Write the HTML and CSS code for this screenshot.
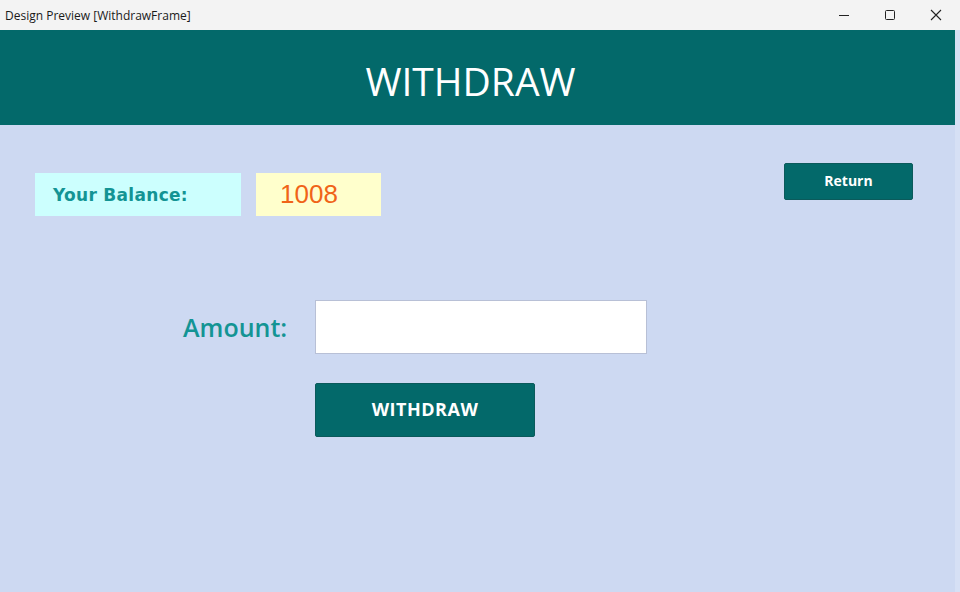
FILE: index.html
```html
<!DOCTYPE html>
<html>
<head>
<meta charset="utf-8">
<link rel="stylesheet" href="styles.css">
</head>
<body>
<div class="titlebar">
  <span class="title">Design Preview [WithdrawFrame]</span>
  <div class="controls">
    <svg class="ctl" width="12" height="12" viewBox="0 0 12 12"><path d="M1 6.5h10" stroke="#222" stroke-width="1"/></svg>
    <svg class="ctl" width="12" height="12" viewBox="0 0 12 12"><rect x="1.5" y="1.5" width="9" height="9" rx="1" fill="none" stroke="#222" stroke-width="1"/></svg>
    <svg class="ctl" width="12" height="12" viewBox="0 0 12 12"><path d="M1 1L11 11M11 1L1 11" stroke="#222" stroke-width="1.1"/></svg>
  </div>
</div>
<div class="frame">
  <header class="header">WITHDRAW</header>
  <main class="content">
    <div class="top-row">
      <div class="balance-label">Your Balance:</div>
      <div class="balance-value">1008</div>
      <div class="spacer"></div>
      <button class="return-btn">Return</button>
    </div>
    <div class="amount-row">
      <label class="amount-label">Amount:</label>
      <div class="amount-input"></div>
    </div>
    <div class="action-row">
      <button class="withdraw-btn">WITHDRAW</button>
    </div>
  </main>
</div>
</body>
</html>
```
FILE: styles.css
```css
* { box-sizing: border-box; }
html, body { margin: 0; padding: 0; }
body {
  width: 960px;
  height: 592px;
  overflow: hidden;
  background: #cdd9f2;
  font-family: "Open Sans", "Noto Sans", sans-serif;
}
.titlebar {
  height: 30px;
  background: #f3f3f3;
  display: flex;
  align-items: center;
  justify-content: space-between;
  padding-left: 5px;
}
.title {
  font-family: "Open Sans", sans-serif;
  font-size: 12px;
  color: #1a1a1a;
}
.controls {
  display: flex;
  height: 30px;
  align-items: center;
}
.ctl {
  margin: 0 17px 0 17px;
}
.controls .ctl:first-child { margin-left: 0; }
.controls .ctl:last-child { margin-right: 18px; }
.frame {
  height: 562px;
  background: #cdd9f2;
  border-right: 5px solid #d6e0f5;
}
.header {
  height: 95px;
  background: #03696a;
  color: #ffffff;
  font-family: "Open Sans", sans-serif;
  font-size: 39px;
  display: flex;
  align-items: center;
  justify-content: center;
  padding-right: 14px;
  padding-top: 6px;
}
.content {
  padding: 38px 42px 0 35px;
}
.top-row {
  display: flex;
  align-items: flex-start;
}
.balance-label {
  margin-top: 10px;
  width: 206px;
  height: 43px;
  background: #ccfffe;
  color: #139494;
  font-family: "DejaVu Sans", sans-serif;
  font-weight: bold;
  font-size: 17px;
  letter-spacing: 0.3px;
  display: flex;
  align-items: center;
  padding-left: 18px;
}
.balance-value {
  margin-top: 10px;
  margin-left: 15px;
  width: 125px;
  height: 43px;
  background: #ffffcc;
  color: #f06418;
  font-family: "Liberation Sans", sans-serif;
  font-size: 26px;
  display: flex;
  align-items: center;
  padding-left: 24px;
  padding-bottom: 1px;
}
.spacer { flex: 1; }
.return-btn {
  width: 129px;
  height: 37px;
  background: #03696a;
  color: #ffffff;
  border: 1px solid #0b5a5b;
  border-radius: 2px;
  font-family: "Open Sans", sans-serif;
  font-weight: bold;
  font-size: 14px;
  padding: 0 0 2px 0;
}
.amount-row {
  display: flex;
  align-items: center;
  margin-top: 84px;
  padding-left: 148px;
}
.amount-label {
  width: 132px;
  color: #139494;
  font-family: "Open Sans", sans-serif;
  font-weight: 600;
  font-size: 25px;
  padding-bottom: 0;
}
.amount-input {
  width: 332px;
  height: 54px;
  background: #ffffff;
  border: 1px solid #b8c0d6;
}
.action-row {
  display: flex;
  margin-top: 29px;
  padding-left: 280px;
}
.withdraw-btn {
  width: 220px;
  height: 54px;
  background: #03696a;
  color: #ffffff;
  border: 1px solid #0b5a5b;
  border-radius: 2px;
  font-family: "Open Sans", sans-serif;
  font-weight: bold;
  font-size: 18px;
  letter-spacing: 0.5px;
  padding: 0 0 2px 0;
}
```
